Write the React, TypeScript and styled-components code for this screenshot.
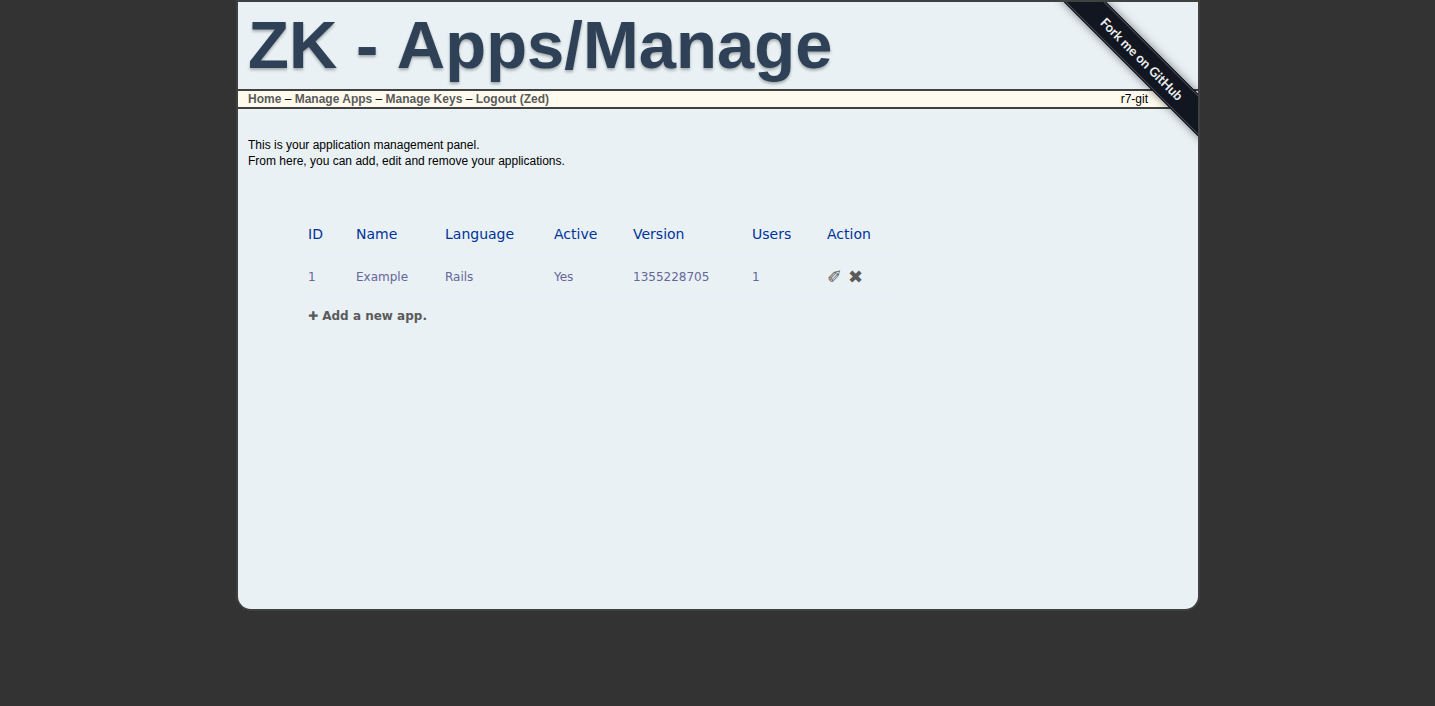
import React from "react";
import styled, { createGlobalStyle } from "styled-components";

const GlobalStyle = createGlobalStyle`
  body {
    margin: 0;
    padding-left: 1px;
    background: #333;
    color: #000;
    font: 12px/16px "Liberation Sans", Arial, sans-serif;
  }
`;

const Page = styled.div`
  position: relative;
  box-sizing: border-box;
  width: 100%;
  max-width: 964px;
  margin: 0 auto;
  overflow: hidden;
  border: 2px solid #404040;
  border-radius: 0 0 15px 15px;
  background: #e9f1f5;
`;

const Title = styled.h1`
  margin: 0;
  padding: 4px 10px 5px;
  color: #2e4156;
  font-size: 67px;
  font-kerning: none;
  line-height: 78px;
  text-shadow: 0 2px 3px rgba(0, 0, 0, 0.3);
`;

const NavBar = styled.nav`
  display: flex;
  justify-content: space-between;
  padding: 0 50px 0 10px;
  border: solid #404040;
  border-width: 2px 0;
  background: #fffaee;
`;

const TextLink = styled.a`
  color: #5a5a5a;
  font-weight: bold;
  text-decoration: none;
`;

const Content = styled.main`
  min-height: 472px;
  padding: 28px 10px 0;
`;

const Intro = styled.p`
  margin: 0 0 44px;
`;

const AppTable = styled.table`
  width: 594px;
  margin-left: 52px;
  border-collapse: collapse;
  table-layout: fixed;
  font-family: "DejaVu Sans", sans-serif;
  text-align: left;
`;

const Column = styled.col<{ $width: number }>`
  width: ${(p) => p.$width}px;
`;

const HeadCell = styled.th`
  padding: 12px 8px;
  border-bottom: 1px solid #e8edff;
  color: #039;
  font-size: 14px;
  font-weight: normal;
  line-height: 18px;
`;

const Cell = styled.td`
  padding: 12px 8px;
  border-bottom: 1px solid #e8edff;
  color: #669;
  line-height: 18px;
`;

const FootCell = styled.td`
  padding: 8px;
  line-height: 18px;
`;

const Actions = styled.div`
  display: flex;
  gap: 6px;
`;

const IconLink = styled(TextLink)`
  font-size: 18px;
  font-weight: normal;
`;

const Ribbon = styled.a`
  position: absolute;
  top: 42px;
  right: -44px;
  box-sizing: border-box;
  width: 200px;
  height: 30px;
  border: solid #121621;
  border-width: 1px 0;
  outline: 1px solid #4c505b;
  outline-offset: -2px;
  background: #121621;
  box-shadow: 0 0 8px rgba(0, 0, 0, 0.5);
  color: #eee;
  font: bold 13px/28px Lato, sans-serif;
  text-align: center;
  text-decoration: none;
  transform: rotate(45deg);
`;

const links = ["Home", "Manage Apps", "Manage Keys", "Logout (Zed)"];

const columns = [
  { name: "ID", width: 48 },
  { name: "Name", width: 89 },
  { name: "Language", width: 109 },
  { name: "Active", width: 79 },
  { name: "Version", width: 119 },
  { name: "Users", width: 75 },
  { name: "Action", width: 75 },
];

const apps = [["1", "Example", "Rails", "Yes", "1355228705", "1"]];

export default function App() {
  return (
    <>
      <GlobalStyle />
      <Page>
        <Title>ZK - Apps/Manage</Title>
        <NavBar>
          <span>
            {links.map((link, i) => (
              <React.Fragment key={link}>
                {i > 0 && " – "}
                <TextLink href="#">{link}</TextLink>
              </React.Fragment>
            ))}
          </span>
          <span>r7-git</span>
        </NavBar>
        <Content>
          <Intro>
            This is your application management panel.
            <br />
            From here, you can add, edit and remove your applications.
          </Intro>
          <AppTable>
            <colgroup>
              {columns.map((c) => (
                <Column key={c.name} $width={c.width} />
              ))}
            </colgroup>
            <thead>
              <tr>
                {columns.map((c) => (
                  <HeadCell key={c.name} scope="col">{c.name}</HeadCell>
                ))}
              </tr>
            </thead>
            <tbody>
              {apps.map((app) => (
                <tr key={app[0]}>
                  {app.map((value, i) => (
                    <Cell key={i}>{value}</Cell>
                  ))}
                  <Cell>
                    <Actions>
                      <IconLink href="#" aria-label="Edit">✐</IconLink>
                      <IconLink href="#" aria-label="Delete">✖</IconLink>
                    </Actions>
                  </Cell>
                </tr>
              ))}
            </tbody>
            <tfoot>
              <tr>
                <FootCell colSpan={columns.length}>
                  <TextLink href="#">✚ Add a new app.</TextLink>
                </FootCell>
              </tr>
            </tfoot>
          </AppTable>
        </Content>
        <Ribbon href="#">Fork me on GitHub</Ribbon>
      </Page>
    </>
  );
}
